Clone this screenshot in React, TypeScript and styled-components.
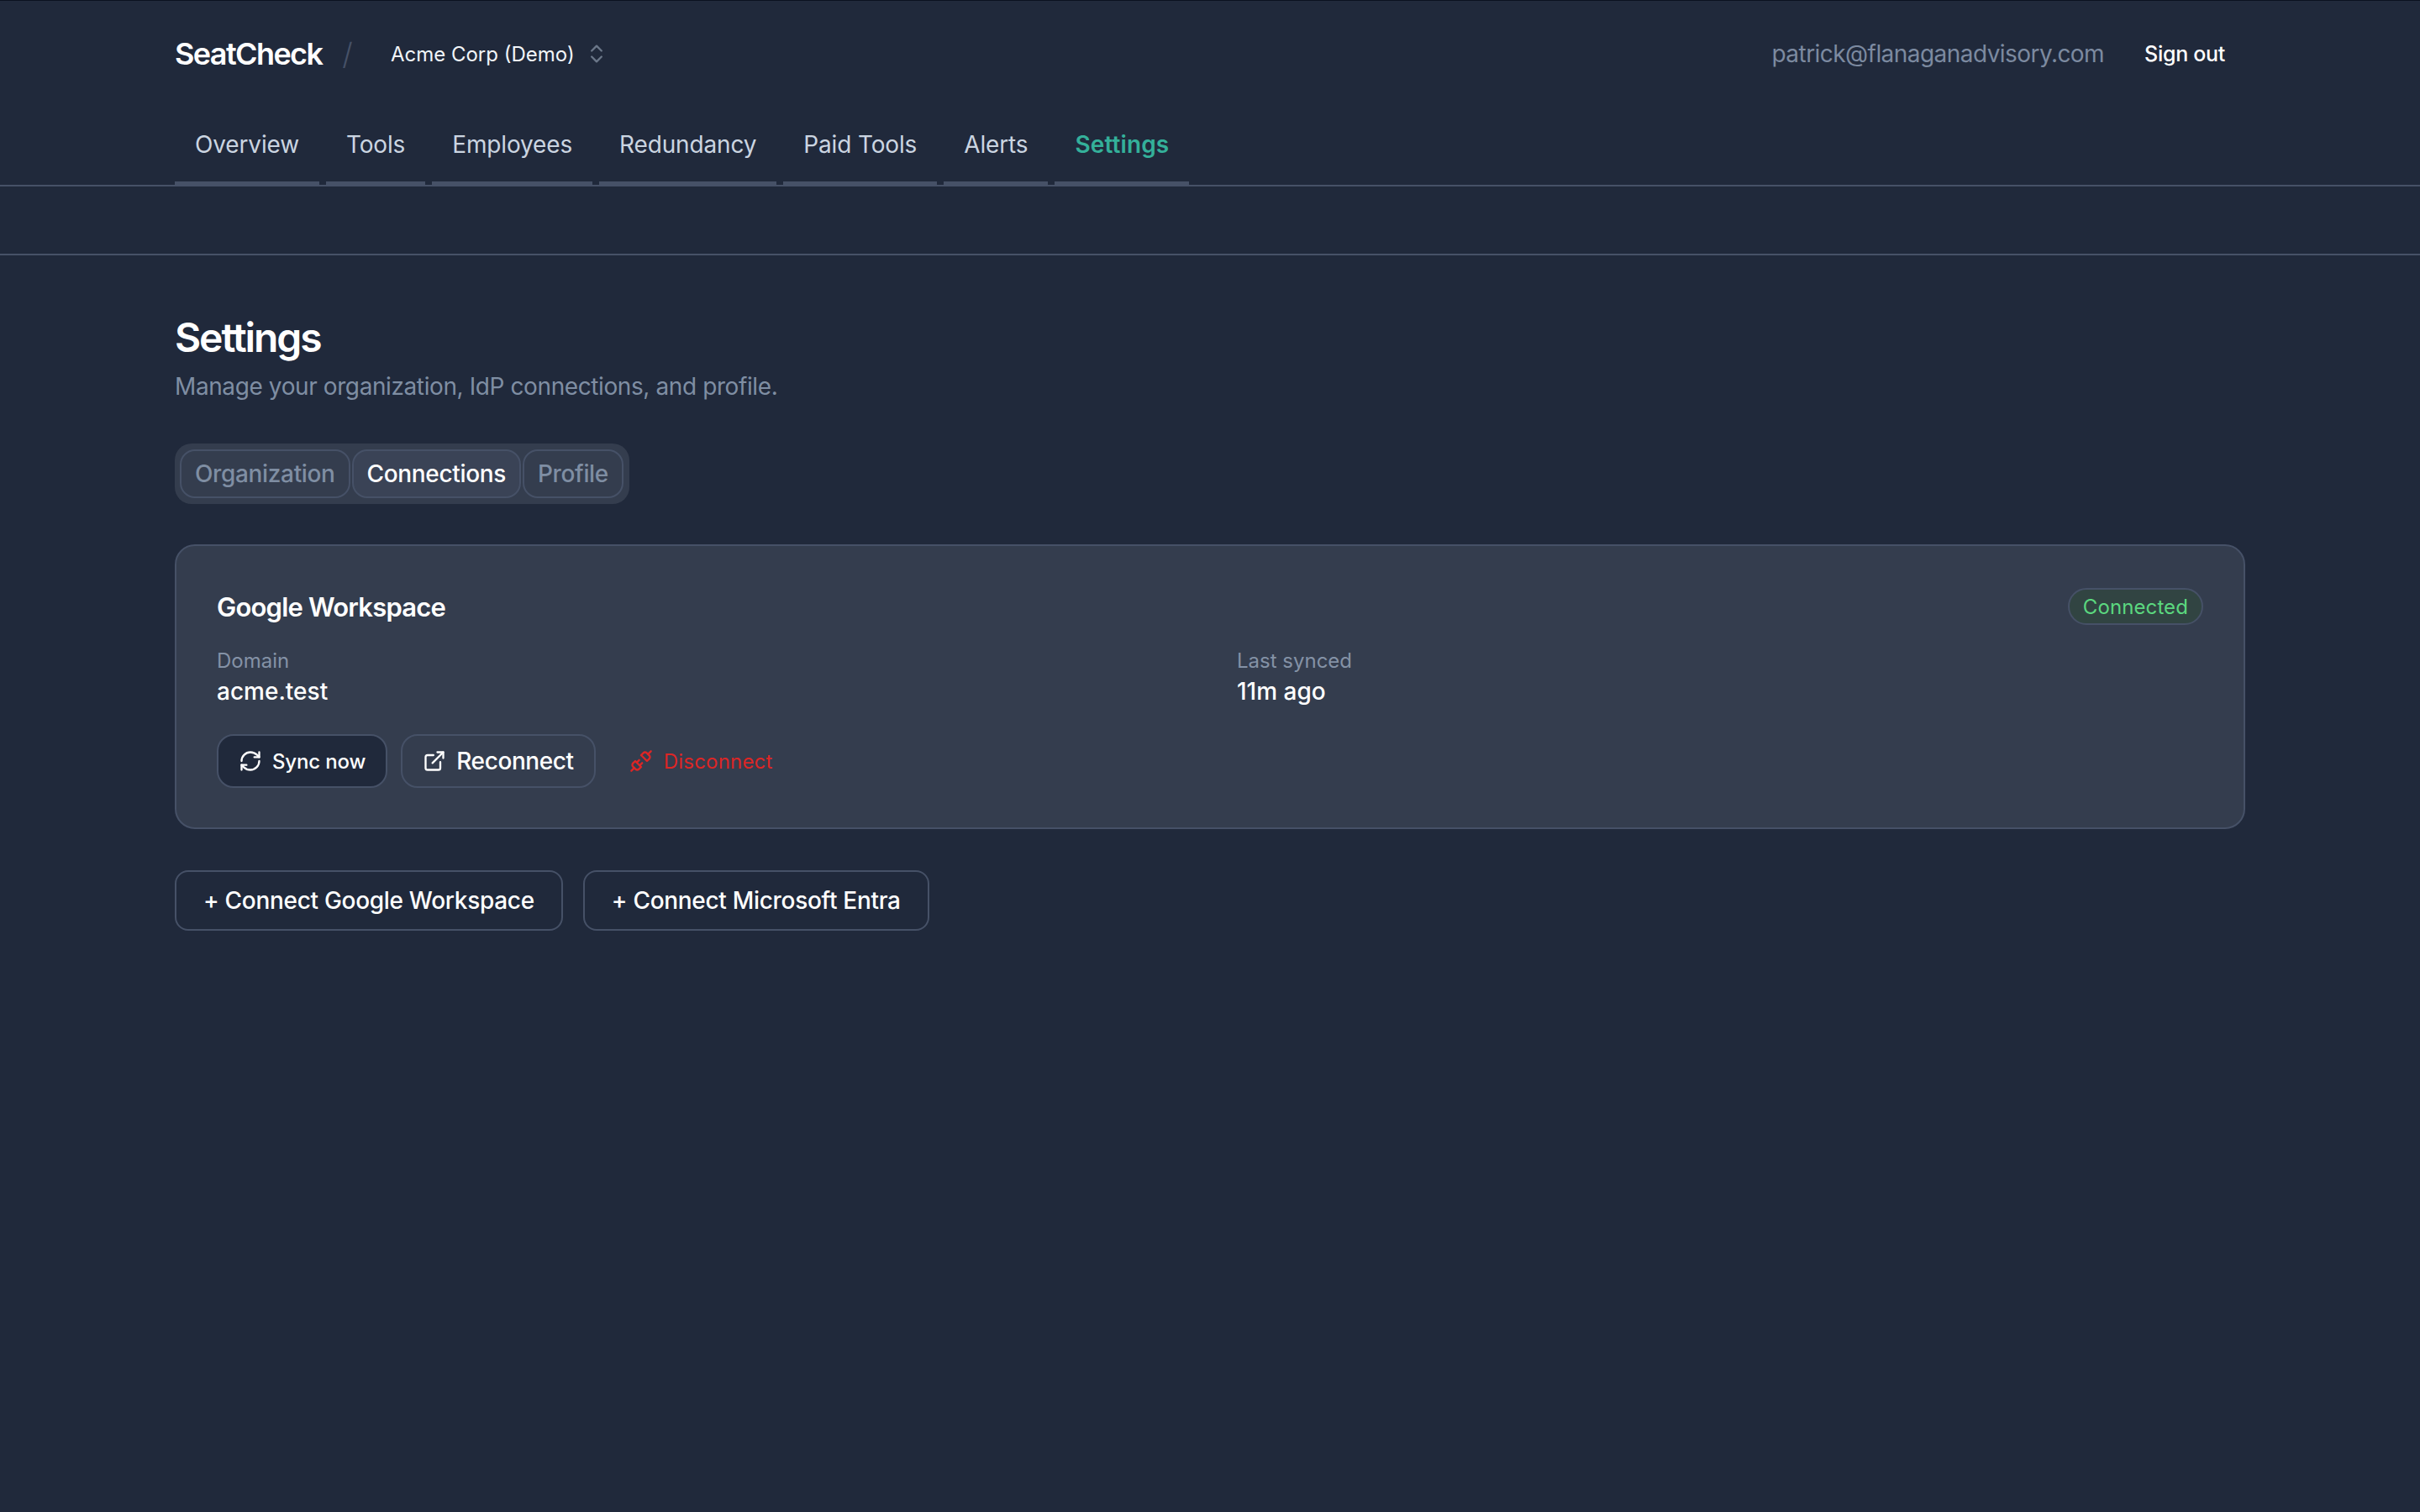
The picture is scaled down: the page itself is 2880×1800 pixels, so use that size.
import React from "react";
import styled, { createGlobalStyle } from "styled-components";
import { ChevronsUpDown, ExternalLink, RefreshCw, Unplug } from "lucide-react";

const GlobalStyle = createGlobalStyle`
  html, body {
    margin: 0;
    padding: 0;
    background: #20293b;
  }
  body {
    font-family: Inter, "Liberation Sans", sans-serif;
    color: #ffffff;
    border-top: 1px solid #0b1220;
  }
  * {
    box-sizing: border-box;
  }
`;

const Page = styled.div`
  min-height: 1799px;
  background: #20293b;
`;

const Container = styled.div`
  width: 2560px;
  margin: 0 auto;
  padding: 0 48px;
`;

const TopRow = styled.div`
  display: flex;
  align-items: center;
  justify-content: space-between;
  height: 126px;
`;

const Left = styled.div`
  display: flex;
  align-items: center;
`;

const Brand = styled.div`
  font-size: 36px;
  font-weight: 600;
  letter-spacing: -1.6px;
`;

const Slash = styled.span`
  margin-left: 24px;
  font-size: 36px;
  font-weight: 300;
  color: #465167;
`;

const OrgSwitch = styled.div`
  display: flex;
  align-items: center;
  gap: 12px;
  margin-left: 45px;
  font-size: 24px;
  font-weight: 400;
  color: #f1f5f9;
  svg {
    color: #6b7789;
  }
`;

const Right = styled.div`
  display: flex;
  align-items: center;
  gap: 24px;
`;

const Email = styled.span`
  font-size: 28px;
  letter-spacing: -0.55px;
  color: #7c8aa0;
`;

const SignOut = styled.button`
  padding: 0 24px;
  border: none;
  background: transparent;
  color: #ffffff;
  font-family: inherit;
  font-size: 25px;
  font-weight: 500;
  letter-spacing: -0.3px;
`;

const NavBar = styled.nav`
  height: 95px;
  border-bottom: 2px solid #465167;
`;

const NavList = styled.div`
  display: flex;
  gap: 8px;
`;

const NavItem = styled.a<{ $active?: boolean }>`
  display: flex;
  align-items: center;
  height: 95px;
  padding: 0 24px;
  border-bottom: 6px solid #465167;
  font-size: 28px;
  font-weight: ${(p) => (p.$active ? 600 : 400)};
  letter-spacing: ${(p) => (p.$active ? "0.1px" : "-0.15px")};
  color: ${(p) => (p.$active ? "#34b09a" : "#cbd5e1")};
`;

const SubBar = styled.div`
  height: 82px;
  border-bottom: 2px solid #465167;
`;

const Main = styled.main`
  padding-top: 66px;
`;

const Title = styled.h1`
  margin: 0;
  font-size: 48px;
  line-height: 64px;
  font-weight: 600;
  letter-spacing: -2.1px;
`;

const Subtitle = styled.p`
  margin: 6px 0 0;
  font-size: 28px;
  line-height: 40px;
  letter-spacing: -0.4px;
  color: #7f8ea3;
`;

const TabList = styled.div`
  display: inline-flex;
  align-items: center;
  gap: 2px;
  height: 72px;
  margin-top: 48px;
  padding: 0 7px 0 6px;
  border-radius: 20px;
  background: #343d4e;
  vertical-align: top;
`;

const Tab = styled.button<{ $active?: boolean }>`
  height: 58px;
  padding: 0 16px;
  border: 2px solid #465167;
  border-radius: 18px;
  background: ${(p) => (p.$active ? "#3a4356" : "#343d4e")};
  color: ${(p) => (p.$active ? "#ffffff" : "#7f8ea3")};
  font-family: inherit;
  font-size: 28px;
  font-weight: 500;
  letter-spacing: -0.35px;
`;

const Card = styled.section`
  margin-top: 48px;
  padding: 48px;
  height: 339px;
  border: 2px solid #465167;
  border-radius: 24px;
  background: #343d4e;
`;

const CardHead = styled.div`
  display: flex;
  align-items: center;
  justify-content: space-between;
  height: 44px;
  margin-top: 2px;
`;

const CardTitle = styled.h2`
  margin: 0;
  font-size: 31px;
  font-weight: 600;
  letter-spacing: -0.8px;
`;

const Badge = styled.span`
  display: inline-flex;
  align-items: center;
  height: 44px;
  padding: 0 16px;
  border: 2px solid #465167;
  border-radius: 22px;
  background: #314442;
  color: #5bd77f;
  font-size: 24px;
  font-weight: 400;
  letter-spacing: 0.1px;
`;

const Facts = styled.div`
  display: grid;
  grid-template-columns: 1fr 1fr;
  gap: 64px;
  margin-top: 26px;
`;

const FactLabel = styled.div`
  font-size: 24px;
  line-height: 34px;
  color: #8492a6;
`;

const FactValue = styled.div`
  font-size: 28px;
  line-height: 38px;
  font-weight: 500;
`;

const Actions = styled.div`
  display: flex;
  align-items: center;
  gap: 16px;
  margin-top: 32px;
`;

const SmallButton = styled.button<{ $solid?: boolean }>`
  display: flex;
  align-items: center;
  gap: 12px;
  height: 64px;
  padding: 0 24px;
  border: 2px solid #465167;
  border-radius: 20px;
  background: ${(p) => (p.$solid ? "#20293b" : "transparent")};
  color: #ffffff;
  font-family: inherit;
  font-size: ${(p) => (p.$solid ? "24px" : "28px")};
  font-weight: 500;
  letter-spacing: ${(p) => (p.$solid ? "-0.15px" : "-0.4px")};
`;

const DangerButton = styled.button`
  display: flex;
  align-items: center;
  gap: 13px;
  height: 64px;
  padding: 0 24px;
  border: none;
  background: transparent;
  color: #dc2626;
  font-family: inherit;
  font-size: 24px;
  font-weight: 400;
  letter-spacing: 0.2px;
`;

const ConnectRow = styled.div`
  display: flex;
  gap: 24px;
  margin-top: 49px;
`;

const ConnectButton = styled.button`
  height: 72px;
  padding: 0 32px;
  border: 2px solid #465167;
  border-radius: 16px;
  background: transparent;
  color: #ffffff;
  font-family: inherit;
  font-size: 28px;
  font-weight: 500;
  letter-spacing: -0.3px;
`;

const navItems = ["Overview", "Tools", "Employees", "Redundancy", "Paid Tools", "Alerts", "Settings"];

export default function App() {
  return (
    <Page>
      <GlobalStyle />
      <Container>
        <TopRow>
          <Left>
            <Brand>SeatCheck</Brand>
            <Slash>/</Slash>
            <OrgSwitch>
              Acme Corp (Demo)
              <ChevronsUpDown size={28} strokeWidth={2} />
            </OrgSwitch>
          </Left>
          <Right>
            <Email>patrick@flanaganadvisory.com</Email>
            <SignOut>Sign out</SignOut>
          </Right>
        </TopRow>
      </Container>
      <NavBar>
        <Container>
          <NavList>
            {navItems.map((item) => (
              <NavItem key={item} $active={item === "Settings"}>
                {item}
              </NavItem>
            ))}
          </NavList>
        </Container>
      </NavBar>
      <SubBar />
      <Main>
        <Container>
          <Title>Settings</Title>
          <Subtitle>Manage your organization, IdP connections, and profile.</Subtitle>
          <TabList>
            <Tab>Organization</Tab>
            <Tab $active>Connections</Tab>
            <Tab>Profile</Tab>
          </TabList>
          <Card>
            <CardHead>
              <CardTitle>Google Workspace</CardTitle>
              <Badge>Connected</Badge>
            </CardHead>
            <Facts>
              <div>
                <FactLabel>Domain</FactLabel>
                <FactValue>acme.test</FactValue>
              </div>
              <div>
                <FactLabel>Last synced</FactLabel>
                <FactValue>11m ago</FactValue>
              </div>
            </Facts>
            <Actions>
              <SmallButton $solid>
                <RefreshCw size={28} />
                Sync now
              </SmallButton>
              <SmallButton>
                <ExternalLink size={28} />
                Reconnect
              </SmallButton>
              <DangerButton>
                <Unplug size={28} />
                Disconnect
              </DangerButton>
            </Actions>
          </Card>
          <ConnectRow>
            <ConnectButton>+ Connect Google Workspace</ConnectButton>
            <ConnectButton>+ Connect Microsoft Entra</ConnectButton>
          </ConnectRow>
        </Container>
      </Main>
    </Page>
  );
}
